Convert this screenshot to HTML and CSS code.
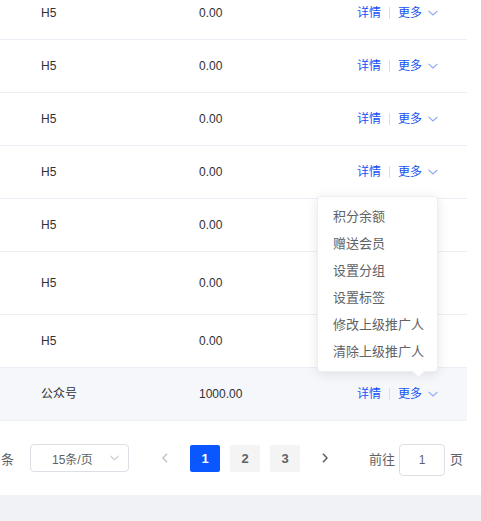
FILE: index.html
```html
<!DOCTYPE html>
<html lang="zh-CN">
<head>
<meta charset="utf-8">
<title>列表</title>
<link rel="stylesheet" href="styles.css">
</head>
<body>
<div class="page">
  <div class="table">
    <div class="row"><div class="cell">H5</div><div class="cell">0.00</div><div class="cell ops"><span class="link">详情</span><span class="sep"></span><span class="link">更多</span><svg class="chev" viewBox="0 0 10 6"><path d="M0.5 0.8 L5 5 L9.5 0.8" /></svg></div></div>
    <div class="row"><div class="cell">H5</div><div class="cell">0.00</div><div class="cell ops"><span class="link">详情</span><span class="sep"></span><span class="link">更多</span><svg class="chev" viewBox="0 0 10 6"><path d="M0.5 0.8 L5 5 L9.5 0.8" /></svg></div></div>
    <div class="row"><div class="cell">H5</div><div class="cell">0.00</div><div class="cell ops"><span class="link">详情</span><span class="sep"></span><span class="link">更多</span><svg class="chev" viewBox="0 0 10 6"><path d="M0.5 0.8 L5 5 L9.5 0.8" /></svg></div></div>
    <div class="row"><div class="cell">H5</div><div class="cell">0.00</div><div class="cell ops"><span class="link">详情</span><span class="sep"></span><span class="link">更多</span><svg class="chev" viewBox="0 0 10 6"><path d="M0.5 0.8 L5 5 L9.5 0.8" /></svg></div></div>
    <div class="row"><div class="cell">H5</div><div class="cell">0.00</div><div class="cell ops"></div></div>
    <div class="row tall"><div class="cell">H5</div><div class="cell">0.00</div><div class="cell ops"></div></div>
    <div class="row"><div class="cell">H5</div><div class="cell">0.00</div><div class="cell ops"></div></div>
    <div class="row hover"><div class="cell">公众号</div><div class="cell">1000.00</div><div class="cell ops"><span class="link">详情</span><span class="sep"></span><span class="link">更多</span><svg class="chev" viewBox="0 0 10 6"><path d="M0.5 0.8 L5 5 L9.5 0.8" /></svg></div></div>
  </div>

  <div class="pager">
    <span class="total">条</span>
    <div class="select"><span class="select-text">15条/页</span><svg class="select-chev" viewBox="0 0 10 6"><path d="M0.5 0.8 L5 5 L9.5 0.8" /></svg></div>
    <span class="nav prev"><svg viewBox="0 0 6 10"><path d="M5 0.8 L1 5 L5 9.2" /></svg></span>
    <span class="num active">1</span>
    <span class="num">2</span>
    <span class="num">3</span>
    <span class="nav next"><svg viewBox="0 0 6 10"><path d="M1 0.8 L5 5 L1 9.2" /></svg></span>
    <span class="jump">前往</span>
    <div class="jump-input">1</div>
    <span class="jump-end">页</span>
  </div>

  <div class="footer"></div>

  <div class="dropdown">
    <div class="item">积分余额</div>
    <div class="item">赠送会员</div>
    <div class="item">设置分组</div>
    <div class="item">设置标签</div>
    <div class="item">修改上级推广人</div>
    <div class="item">清除上级推广人</div>
    <span class="arrow"></span>
  </div>
</div>
</body>
</html>
```

FILE: styles.css
```css
html, body {
  margin: 0;
  padding: 0;
  background: #ffffff;
}
body {
  width: 481px;
  height: 521px;
  overflow: hidden;
  font-family: "Liberation Sans", "Noto Sans CJK SC", sans-serif;
  color: #303133;
  font-size: 12px;
}
.page {
  position: relative;
  width: 481px;
  height: 521px;
  overflow: hidden;
}
.table {
  width: 467px;
  margin-top: -13px;
}
.row {
  display: grid;
  grid-template-columns: 158px 158px 151px;
  align-items: center;
  height: 52px;
  border-bottom: 1px solid #ebeef5;
}
.row.tall {
  height: 62px;
}
.row.hover {
  background: #f5f7fa;
}
.cell {
  padding-left: 41px;
  font-size: 12px;
  line-height: 16px;
  color: #303133;
  white-space: nowrap;
}
.ops {
  display: flex;
  align-items: center;
}
.link {
  color: #1552f5;
  font-size: 12px;
}
.sep {
  display: inline-block;
  width: 1px;
  height: 12px;
  background: #dcdfe6;
  margin: 0 8px;
}
.chev {
  width: 10px;
  height: 6px;
  margin-left: 6px;
  fill: none;
  stroke: #8ea6f7;
  stroke-width: 1.1;
}
.pager {
  display: flex;
  align-items: center;
  height: 74px;
  font-size: 13px;
  color: #606266;
}
.total {
  margin-left: 1px;
  font-size: 13px;
  color: #606266;
}
.select {
  box-sizing: border-box;
  width: 99px;
  height: 28px;
  margin-left: 16px;
  border: 1px solid #dcdfe6;
  border-radius: 4px;
  display: flex;
  align-items: center;
  position: relative;
}
.select-text {
  margin-left: 21px;
  font-size: 12px;
  color: #606266;
}
.select-chev {
  width: 9px;
  height: 6px;
  margin-left: auto;
  margin-right: 9px;
  fill: none;
  stroke: #a8abb2;
  stroke-width: 1.1;
}
.nav {
  width: 30px;
  height: 28px;
  display: flex;
  align-items: center;
  justify-content: center;
}
.nav svg {
  width: 6px;
  height: 10px;
  fill: none;
  stroke-width: 1.6;
}
.prev {
  margin-left: 21px;
  margin-right: 10px;
}
.prev svg {
  stroke: #c0c4cc;
}
.next svg {
  stroke: #606266;
}
.num {
  box-sizing: border-box;
  width: 30px;
  height: 27px;
  margin-right: 10px;
  background: #f4f4f5;
  border-radius: 2px;
  display: flex;
  align-items: center;
  justify-content: center;
  font-weight: bold;
  font-size: 13px;
  color: #606266;
}
.num.active {
  background: #0a57ff;
  color: #ffffff;
}
.jump {
  margin-left: 29px;
  font-size: 13px;
  color: #606266;
}
.jump-input {
  box-sizing: border-box;
  width: 46px;
  height: 32px;
  margin-left: 4px;
  margin-top: 4px;
  border: 1px solid #dcdfe6;
  border-radius: 4px;
  display: flex;
  align-items: center;
  justify-content: center;
  font-size: 12px;
  color: #606266;
}
.jump-end {
  margin-left: 5px;
  font-size: 13px;
  color: #606266;
}
.footer {
  height: 26px;
  background: #f0f2f5;
}
.dropdown {
  position: absolute;
  top: 196px;
  left: 317px;
  box-sizing: border-box;
  width: 121px;
  padding: 6px 0;
  background: #ffffff;
  border: 1px solid #ebeef5;
  border-radius: 4px;
  box-shadow: 0 2px 12px rgba(0, 0, 0, 0.1);
}
.item {
  padding-left: 15px;
  line-height: 27px;
  font-size: 13px;
  color: #606266;
  white-space: nowrap;
}
.arrow {
  position: absolute;
  left: 96px;
  bottom: -5px;
  width: 8px;
  height: 8px;
  background: #ffffff;
  border-right: 1px solid #ebeef5;
  border-bottom: 1px solid #ebeef5;
  transform: rotate(45deg);
}
```
